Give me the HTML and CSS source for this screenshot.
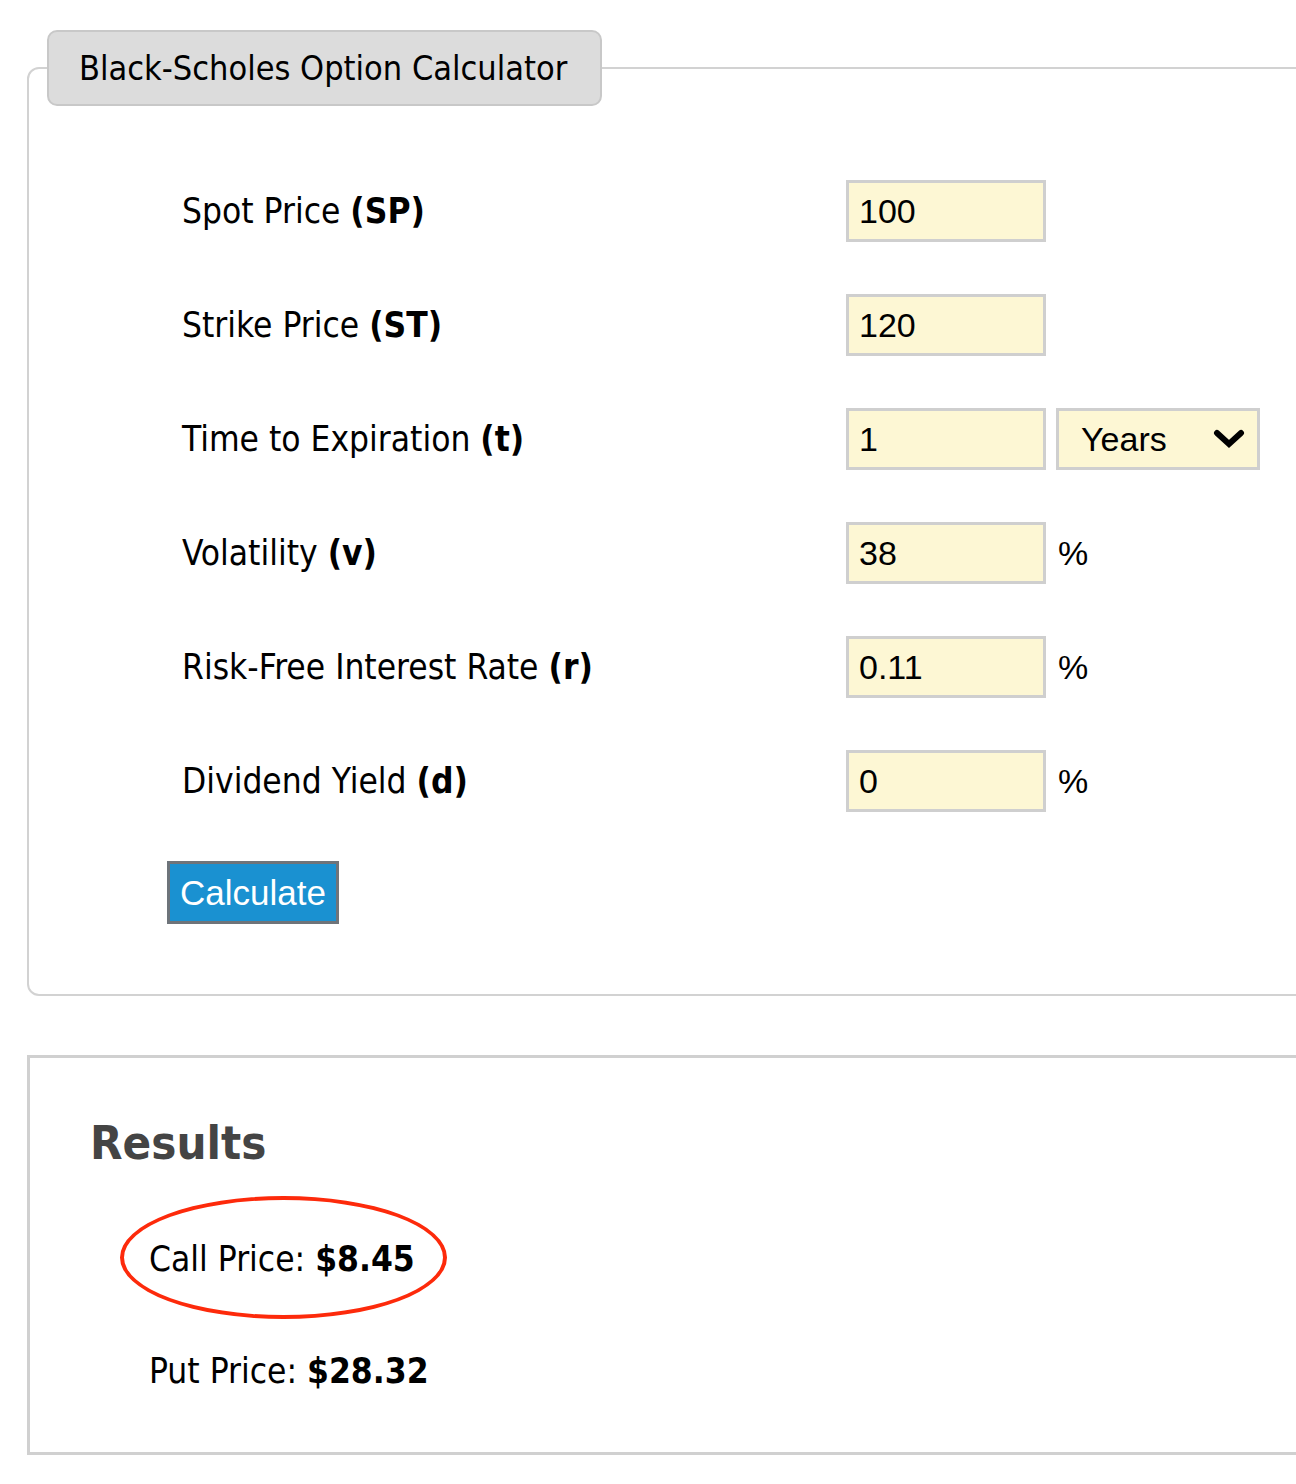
FILE: index.html
```html
<!DOCTYPE html>
<html>
<head>
<meta charset="utf-8">
<title>Black-Scholes Option Calculator</title>
<link rel="stylesheet" href="styles.css">
</head>
<body>
<div class="page">
  <fieldset class="calc">
    <legend class="calc-title">Black-Scholes Option Calculator</legend>
    <div class="rows">
      <div class="row">
        <span class="label">Spot Price <b>(SP)</b></span>
        <span class="field">100</span>
      </div>
      <div class="row">
        <span class="label">Strike Price <b>(ST)</b></span>
        <span class="field">120</span>
      </div>
      <div class="row">
        <span class="label">Time to Expiration <b>(t)</b></span>
        <span class="field">1</span>
        <span class="select">Years
          <svg class="chev" width="32" height="22" viewBox="0 0 32 22"><path d="M4 5 L16 16 L28 5" fill="none" stroke="#000" stroke-width="6" stroke-linecap="round" stroke-linejoin="miter"/></svg>
        </span>
      </div>
      <div class="row">
        <span class="label">Volatility <b>(v)</b></span>
        <span class="field">38</span>
        <span class="unit">%</span>
      </div>
      <div class="row">
        <span class="label">Risk-Free Interest Rate <b>(r)</b></span>
        <span class="field">0.11</span>
        <span class="unit">%</span>
      </div>
      <div class="row">
        <span class="label">Dividend Yield <b>(d)</b></span>
        <span class="field">0</span>
        <span class="unit">%</span>
      </div>
    </div>
    <div class="actions">
      <span class="btn">Calculate</span>
    </div>
  </fieldset>

  <section class="results">
    <h2 class="results-title">Results</h2>
    <p class="price call"><span class="circled">Call Price: <b>$8.45</b></span></p>
    <p class="price">Put Price: <b>$28.32</b></p>
  </section>
</div>
</body>
</html>
```

FILE: styles.css
```css
html, body {
  margin: 0;
  padding: 0;
  background: #fff;
  overflow: hidden;
}
.page {
  padding: 30px 0 0 27px;
  width: 1320px;
  font-family: "DejaVu Sans", Verdana, sans-serif;
  font-stretch: condensed;
  font-size: 35px;
  color: #000;
}
.calc {
  margin: 0;
  padding: 0 18px 0 18px;
  border: 2px solid #d2d2d2;
  border-radius: 12px;
  width: 1400px;
}
.calc-title {
  margin: 0;
  padding: 0 33px 0 30px;
  height: 72px;
  line-height: 72px;
  background: #dcdcdc;
  border: 2px solid #c8c8c8;
  border-radius: 10px;
  font-size: 34px;
}
.rows {
  padding: 74px 0 0 135px;
  display: flex;
  flex-direction: column;
  gap: 52px;
}
.row {
  display: flex;
  align-items: center;
  height: 62px;
}
.label {
  width: 664px;
}
.label b {
  font-weight: 800;
}
.field, .select {
  box-sizing: border-box;
  height: 62px;
  width: 200px;
  border: 3px solid #cfcfcf;
  background: #fdf7d4;
  font-family: "Liberation Sans", Arial, sans-serif;
  font-stretch: normal;
  font-size: 34px;
  line-height: 56px;
  padding-left: 10px;
}
.select {
  margin-left: 10px;
  width: 204px;
  padding-left: 22px;
  display: flex;
  align-items: center;
  justify-content: space-between;
  padding-right: 12px;
}
.chev { display: block; }
.unit {
  margin-left: 12px;
  font-family: "Liberation Sans", Arial, sans-serif;
  font-stretch: normal;
  font-size: 34px;
}
.actions {
  padding: 49px 0 70px 120px;
}
.btn {
  display: inline-block;
  box-sizing: border-box;
  height: 63px;
  line-height: 57px;
  padding: 0 10px;
  background: #1a91d1;
  border: 3px solid #6e747a;
  color: #fff;
  font-family: "Liberation Sans", Arial, sans-serif;
  font-stretch: normal;
  font-size: 35px;
}
.results {
  margin-top: 59px;
  border: 3px solid #d0d0d0;
  width: 1400px;
  height: 400px;
  box-sizing: border-box;
  padding: 54px 0 0 60px;
}
.results-title {
  margin: 0;
  font-size: 47px;
  font-weight: bold;
  color: #444;
  line-height: 62px;
}
.price {
  margin: 0;
  padding-left: 59px;
  line-height: 50px;
}
.price.call {
  margin-top: 60px;
  margin-bottom: 62px;
}
.circled {
  position: relative;
}
.circled::before {
  content: "";
  position: absolute;
  left: -29px;
  top: -43px;
  width: 319px;
  height: 115px;
  border: 4px solid #fd2a0b;
  border-radius: 50%;
}
```
